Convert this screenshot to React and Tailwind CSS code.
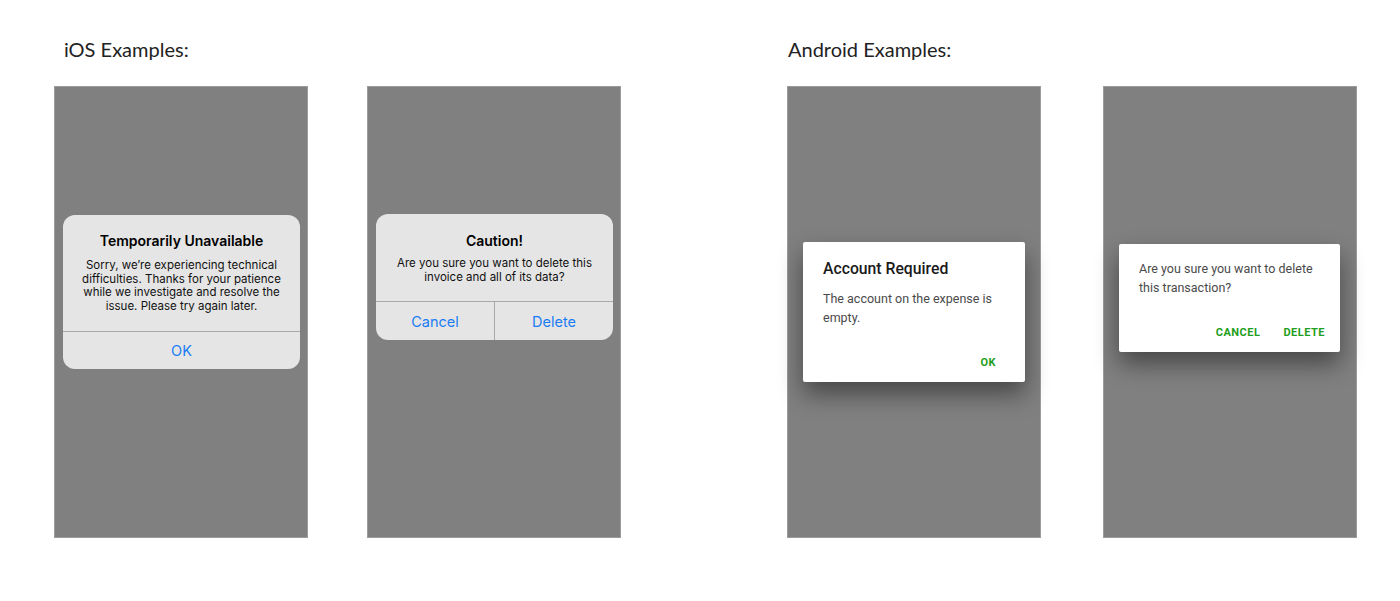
export default function App() {
  const ios = { fontFamily: 'Inter, "Liberation Sans", sans-serif' };
  const droid = { fontFamily: 'Roboto, "Liberation Sans", sans-serif' };
  const head = { fontFamily: 'Lato, "Noto Sans", sans-serif' };
  return (
    <div className="w-[1400px] h-[601px] bg-white overflow-hidden">
      <div className="flex pt-[37px]">
        <section className="ml-[54px]">
          <h2 style={head} className="pl-[10px] text-[20px] leading-[24px] text-[#222]">iOS Examples:</h2>
          <div className="flex gap-[59px] mt-[25px]">
            <div className="w-[254px] h-[452px] border border-[#9c9c9c] bg-[#808080] pt-[128px] pl-[8px]">
              <div style={ios} className="w-[237px] rounded-[12px] bg-[#e5e5e5] text-center">
                <div className="pt-[17px] px-[12px] pb-[18px]">
                  <div className="text-[14px] leading-[18px] font-semibold text-black">Temporarily Unavailable</div>
                  <p className="mt-[9px] text-[11.5px] leading-[13.5px] text-[#111]">
                    Sorry, we’re experiencing technical difficulties. Thanks for your patience while we investigate and resolve the issue. Please try again later.
                  </p>
                </div>
                <div className="border-t border-[#a9a9a9] h-[38px] flex items-center justify-center text-[14.5px] text-[#1a7cf4]">OK</div>
              </div>
            </div>
            <div className="w-[254px] h-[452px] border border-[#9c9c9c] bg-[#808080] pt-[127px] pl-[8px]">
              <div style={ios} className="w-[237px] rounded-[12px] bg-[#e5e5e5] text-center">
                <div className="pt-[18px] px-[12px] pb-[17px]">
                  <div className="text-[14px] leading-[18px] font-semibold text-black">Caution!</div>
                  <p className="mt-[6px] text-[11.5px] leading-[14px] text-[#111]">
                    Are you sure you want to delete this invoice and all of its data?
                  </p>
                </div>
                <div className="border-t border-[#a9a9a9] h-[39px] flex text-[14.5px] text-[#1a7cf4]">
                  <div className="flex-1 flex items-center justify-center border-r border-[#a9a9a9] pt-[2px]">Cancel</div>
                  <div className="flex-1 flex items-center justify-center pt-[2px]">Delete</div>
                </div>
              </div>
            </div>
          </div>
        </section>
        <section className="ml-[166px]">
          <h2 style={head} className="pl-[1px] text-[20px] leading-[24px] text-[#222]">Android Examples:</h2>
          <div className="flex gap-[62px] mt-[25px]">
            <div className="w-[254px] h-[452px] border border-[#9c9c9c] bg-[#808080] pt-[155px] pl-[15px]">
              <div style={droid} className="w-[222px] bg-white rounded-[2px] shadow-[0_12px_24px_rgba(0,0,0,0.45)] pt-[17px] pl-[20px] pr-[18px] pb-[11px]">
                <div className="text-[15.75px] leading-[20px] font-medium text-[#1a1a1a]">Account Required</div>
                <p className="mt-[9.5px] text-[12.5px] leading-[19px] text-[#4a4a4a]">The account on the expense is empty.</p>
                <div className="mt-[28px] mr-[11px] flex justify-end text-[11px] leading-[16px] font-bold tracking-[0.4px] text-[#1f9e20]">OK</div>
              </div>
            </div>
            <div className="w-[254px] h-[452px] border border-[#9c9c9c] bg-[#808080] pt-[157px] pl-[15px]">
              <div style={droid} className="w-[221px] bg-white rounded-[2px] shadow-[0_12px_24px_rgba(0,0,0,0.45)] pt-[15px] pl-[20px] pr-[15px] pb-[11px]">
                <p className="text-[12.5px] leading-[19px] text-[#4a4a4a]">Are you sure you want to delete this transaction?</p>
                <div className="mt-[28px] flex justify-end gap-[23px] text-[11px] leading-[16px] font-bold tracking-[0.5px] text-[#1f9e20]">
                  <span>CANCEL</span>
                  <span>DELETE</span>
                </div>
              </div>
            </div>
          </div>
        </section>
      </div>
    </div>
  );
}
